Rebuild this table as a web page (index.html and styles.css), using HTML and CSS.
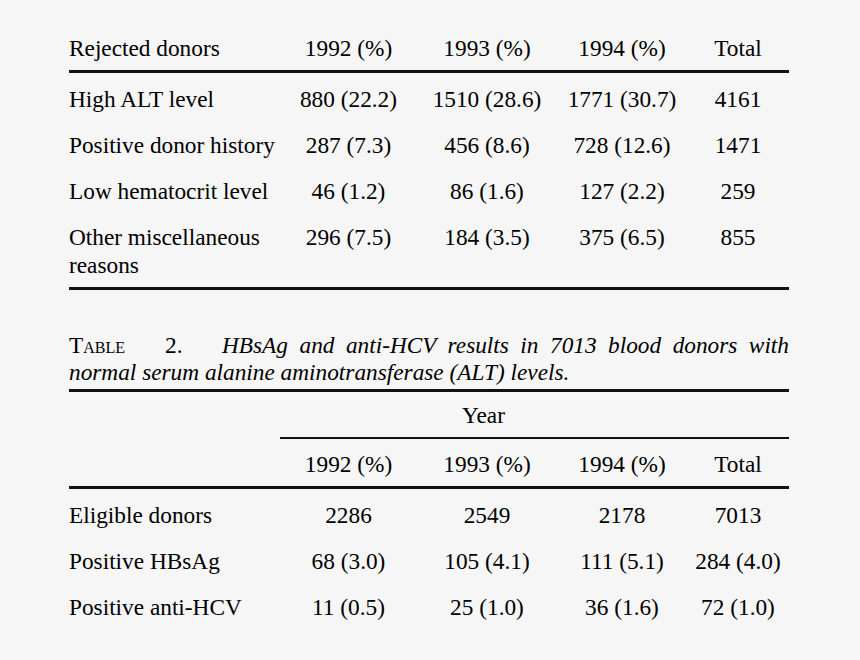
FILE: index.html
```html
<!DOCTYPE html>
<html>
<head>
<meta charset="utf-8">
<link rel="stylesheet" href="styles.css">
</head>
<body>
<div class="page">
  <table class="data t1">
    <colgroup>
      <col class="c1"><col class="c2"><col class="c3"><col class="c4"><col class="c5">
    </colgroup>
    <thead>
      <tr class="head">
        <th class="lab">Rejected donors</th>
        <th>1992 (%)</th>
        <th>1993 (%)</th>
        <th>1994 (%)</th>
        <th>Total</th>
      </tr>
    </thead>
    <tbody>
      <tr><td class="lab">High ALT level</td><td>880 (22.2)</td><td>1510 (28.6)</td><td>1771 (30.7)</td><td>4161</td></tr>
      <tr><td class="lab">Positive donor history</td><td>287 (7.3)</td><td>456 (8.6)</td><td>728 (12.6)</td><td>1471</td></tr>
      <tr><td class="lab">Low hematocrit level</td><td>46 (1.2)</td><td>86 (1.6)</td><td>127 (2.2)</td><td>259</td></tr>
      <tr class="last"><td class="lab">Other miscellaneous reasons</td><td>296 (7.5)</td><td>184 (3.5)</td><td>375 (6.5)</td><td>855</td></tr>
    </tbody>
  </table>

  <div class="caption">
    <div class="cap-line">
      <span class="sc">Table</span>
      <span class="num">2.</span>
      <span class="cap-first">HBsAg and anti-HCV results in 7013 blood donors with</span>
    </div>
    <div class="cap-rest">normal serum alanine aminotransferase (ALT) levels.</div>
  </div>

  <table class="data t2">
    <colgroup>
      <col class="c1"><col class="c2"><col class="c3"><col class="c4"><col class="c5">
    </colgroup>
    <thead>
      <tr class="year">
        <th class="lab empty"></th>
        <th colspan="3" class="ul">Year</th>
        <th class="ul"></th>
      </tr>
      <tr class="head">
        <th class="lab"></th>
        <th>1992 (%)</th>
        <th>1993 (%)</th>
        <th>1994 (%)</th>
        <th>Total</th>
      </tr>
    </thead>
    <tbody>
      <tr><td class="lab">Eligible donors</td><td>2286</td><td>2549</td><td>2178</td><td>7013</td></tr>
      <tr><td class="lab">Positive HBsAg</td><td>68 (3.0)</td><td>105 (4.1)</td><td>111 (5.1)</td><td>284 (4.0)</td></tr>
      <tr><td class="lab">Positive anti-HCV</td><td>11 (0.5)</td><td>25 (1.0)</td><td>36 (1.6)</td><td>72 (1.0)</td></tr>
    </tbody>
  </table>
</div>
</body>
</html>
```

FILE: styles.css
```css
html, body {
  margin: 0;
  padding: 0;
  background: #f6f6f6;
}

body {
  color: #000;
  font-family: "Liberation Serif", "Times New Roman", serif;
  font-size: 23.3px;
}

.page {
  width: 720px;
  margin-left: 69px;
  padding-top: 26px;
}

.data {
  width: 720px;
  table-layout: fixed;
  border-collapse: separate;
  border-spacing: 0;
}

.c1 { width: 211px; }
.c2 { width: 137px; }
.c3 { width: 140px; }
.c4 { width: 130px; }
.c5 { width: 102px; }

.data th,
.data td {
  font-weight: normal;
  line-height: 28px;
  text-align: center;
  padding: 12px 0 6px;
  white-space: nowrap;
  vertical-align: top;
}

.data .lab {
  text-align: left;
  white-space: normal;
}

.t1 .head th {
  padding: 8px 0 8px;
  border-bottom: 3px solid #111;
}

.t1 .last td {
  padding-bottom: 8px;
  border-bottom: 3px solid #111;
}

.caption {
  margin: 42px 0 3px;
  line-height: 27px;
}

.cap-line {
  display: flex;
}

.caption .sc {
  flex: 0 0 96px;
  font-variant: small-caps;
}

.caption .num {
  flex: 0 0 57px;
}

.cap-first {
  flex: 1;
  font-style: italic;
  text-align: justify;
  text-align-last: justify;
}

.cap-rest {
  font-style: italic;
}

.t2 {
  border-top: 3px solid #111;
}

.t2 .year th {
  padding: 9px 0 8px;
}

.t2 .year .ul {
  border-bottom: 2px solid #111;
}

.t2 .head th {
  padding: 11px 0 8px;
  border-bottom: 3px solid #111;
}
```
